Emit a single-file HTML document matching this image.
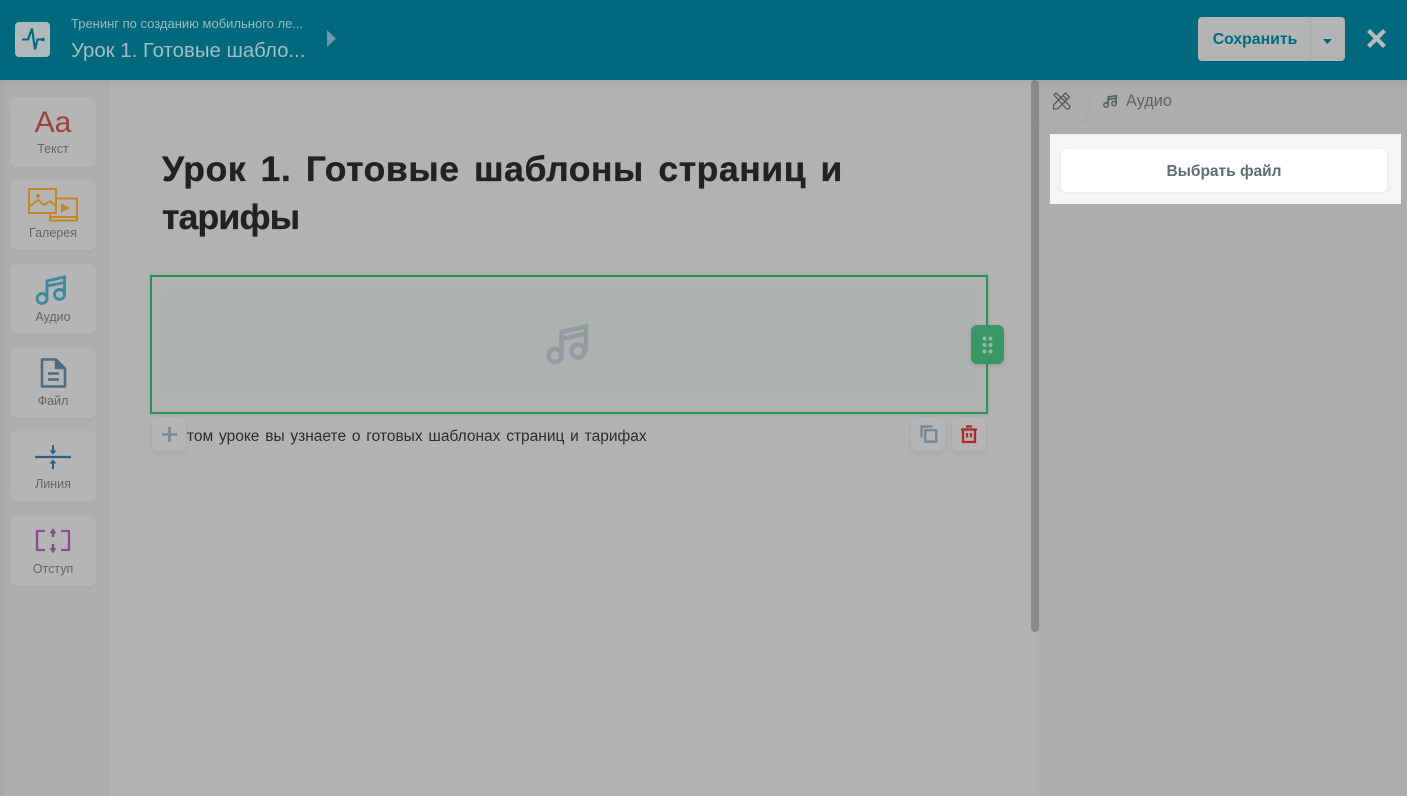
<!DOCTYPE html>
<html lang="ru"><head><meta charset="utf-8"><title>Урок</title>
<style>
html,body{margin:0;padding:0}
body{width:1407px;height:796px;overflow:hidden;position:relative;background:#b2b2b2;font-family:"Liberation Sans","Noto Sans CJK SC",sans-serif}
.a{position:absolute;white-space:nowrap}
svg{position:absolute;display:block;overflow:visible}
.card{position:absolute;left:10px;width:86px;height:70px;background:#b4b5b4;border-radius:6px;box-shadow:0 1px 2px rgba(0,0,0,.03)}
.card span{position:absolute;left:0;right:0;text-align:center;top:45px;font-size:12.5px;line-height:16px;color:#626464}
.mini{position:absolute;width:34px;height:34px;background:#b5b5b5;border-radius:6px;box-shadow:0 2px 5px rgba(0,0,0,.07)}
</style></head><body>
<div class="a" style="left:0;top:80px;width:108px;height:716px;background:#acafad;border-right:1px solid #a9abaa;box-shadow:inset 8px 0 8px -6px rgba(0,0,0,.05)"></div>
<div class="a" style="left:1039px;top:80px;width:368px;height:716px;background:#acaead"></div>
<div class="a" style="left:1031px;top:80px;width:8px;height:552px;background:#8a8a8a;border-radius:4px"></div>
<div class="a" style="left:0;top:80px;width:1407px;height:10px;background:linear-gradient(rgba(0,0,0,.04),rgba(0,0,0,0))"></div>

<div class="a" style="left:0;top:0;width:1407px;height:80px;background:#00697d"></div>
<div class="a" style="left:15px;top:22px;width:35px;height:35px;background:#b2b9ba;border-radius:4px"></div>
<svg style="left:15px;top:22px" width="35" height="35" viewBox="0 0 35 35"><path d="M7 17.500h6l4-11 3 21 2.500-10H27" fill="none" stroke="#00697d" stroke-width="2.100"/><circle cx="28" cy="17.500" r="1.800" fill="#00697d"/></svg>
<div class="a" style="left:71px;top:15px;font-size:13px;line-height:17px;color:#9cbac0">Тренинг по созданию мобильного ле...</div>
<div class="a" style="left:71px;top:38px;font-size:20.400px;line-height:26px;color:#a3bdc3">Урок 1. Готовые шабло...</div>
<svg style="left:327px;top:30px" width="9" height="17"><path d="M0 0l9 8.500-9 8.500z" fill="#679ca8"/></svg>
<div class="a" style="left:1198px;top:17px;width:147px;height:44px;background:#b3b5b5;border-radius:4px"></div>
<div class="a" style="left:1310px;top:17px;width:1px;height:44px;background:#a8abab"></div>
<div class="a" style="left:1199px;top:18px;width:112px;height:44px;line-height:43px;text-align:center;font-size:15.800px;font-weight:bold;color:#00697d">Сохранить</div>
<svg style="left:1323px;top:39px" width="10" height="5"><path d="M0 0h9L4.500 5z" fill="#00637a"/></svg>
<svg style="left:1366px;top:28px" width="21" height="21"><path d="M2.500 2.500l16 16M18.500 2.500l-16 16" stroke="#b3bbbc" stroke-width="4.200" fill="none"/></svg>

<div class="card" style="top:97px"><span style="top:44px">Текст</span><div class="a" style="left:0;right:0;top:7px;text-align:center;font-size:30px;line-height:38px;color:#9a423c">Aa</div></div>
<div class="card" style="top:180px"><span>Галерея</span>
<svg style="left:18px;top:8px" width="50" height="36" fill="none" stroke="#c28521" stroke-width="1.900"><rect x="1" y="1" width="27" height="24"/><path d="M1 19l9-7 6 5 6-4 6 5"/><circle cx="10" cy="8" r="2" fill="#c28521" stroke="none"/><path d="M28 10.500h21v22H22v-7"/><path d="M22 29h27"/><path d="M33 15.500l9 4.500-9 4.500z" fill="#c28521" stroke="none"/></svg></div>
<div class="card" style="top:264px"><span>Аудио</span>
<svg style="left:25px;top:11px" width="36" height="30" fill="none" stroke="#3a8aa1" stroke-width="2.900"><circle cx="7" cy="23.500" r="5"/><circle cx="24.500" cy="19.500" r="5"/><path d="M12 23.500V6L29.500 2v18M12 11L29.500 7.500"/></svg></div>
<div class="card" style="top:348px"><span>Файл</span>
<svg style="left:30px;top:10px" width="27" height="31" fill="none" stroke="#4a6b81" stroke-width="2.600" stroke-linejoin="round"><path d="M2 1.500h14l9 9V28.500H2z"/><path d="M15.500 1.500V10.500H25" fill="#4a6b81" stroke-width="1.500"/><path d="M8 15.500h11M8 21.500h11"/></svg></div>
<div class="card" style="top:431px"><span>Линия</span>
<svg style="left:25px;top:13px" width="36" height="28"><path d="M0 13h36" stroke="#256186" stroke-width="2.200"/><path d="M18 1v7" stroke="#256186" stroke-width="2"/><path d="M14.500 6.500h7L18 10.500zM14.500 19.500h7L18 15.500z" fill="#256186"/><path d="M18 25v-7" stroke="#256186" stroke-width="2"/></svg></div>
<div class="card" style="top:516px"><span>Отступ</span>
<svg style="left:25px;top:12px" width="36" height="28" fill="none" stroke="#8e4993" stroke-width="2.300" stroke-linejoin="round"><path d="M10 3H2v19h8M26 3h8v19h-8"/><path d="M18 3v6M18 16v6" /><path d="M15.500 5l2.500-4 2.500 4zM15.500 20.500l2.500 4 2.500-4z" fill="#8e4993" stroke-width="1"/></svg></div>

<div class="a" style="left:162px;top:146px;font-size:35.500px;line-height:47.500px;font-weight:bold;color:#222;-webkit-text-stroke:.35px #222"><span style="word-spacing:4px;letter-spacing:.58px">Урок 1. Готовые шаблоны страниц и</span><br><span style="letter-spacing:-.8px">тарифы</span></div>
<div class="a" style="left:150px;top:275px;width:834px;height:135px;border:2px solid #2b905b;box-shadow:0 0 3px rgba(47,157,100,.3)"></div>
<div class="a" style="left:162px;top:289px;width:814px;height:107px;background:#acb1b2"></div>
<svg style="left:546px;top:324px" width="44" height="42" fill="none" stroke="#949b9c" stroke-width="4.500"><circle cx="9" cy="31.500" r="6.500"/><circle cx="32" cy="27" r="6.500"/><path d="M15.500 31.500V8L40 2.500V27M15.500 15L40 9.500"/></svg>
<div class="a" style="left:971px;top:325px;width:33px;height:39px;background:#399665;border-radius:6px;box-shadow:0 2px 5px rgba(0,0,0,.1)"></div>
<svg style="left:982px;top:336px" width="11" height="18" fill="#9cb8a9"><circle cx="2.500" cy="2.500" r="2"/><circle cx="8.500" cy="2.500" r="2"/><circle cx="2.500" cy="9" r="2"/><circle cx="8.500" cy="9" r="2"/><circle cx="2.500" cy="15.500" r="2"/><circle cx="8.500" cy="15.500" r="2"/></svg>

<div class="a" style="left:187px;top:427px;font-size:15.500px;line-height:20px;color:#2c2c2c;word-spacing:1.500px">том уроке вы узнаете о готовых шаблонах страниц и тарифах</div>
<div class="mini" style="left:152px;top:417px"></div>
<svg style="left:162px;top:427px" width="15" height="15"><path d="M7.500 0v15M0 7.500h15" stroke="#7a8a98" stroke-width="2.800"/></svg>
<div class="mini" style="left:911px;top:417px"></div>
<svg style="left:920px;top:425px" width="18" height="18" fill="none" stroke="#738696" stroke-width="2.300"><rect x="5.200" y="5.200" width="11" height="11.500" /><path d="M1.500 12.500V1.500h11"/></svg>
<div class="mini" style="left:952px;top:417px"></div>
<svg style="left:960px;top:425px" width="18" height="18" fill="none" stroke="#a92d25" stroke-width="2.300"><path d="M1 4.500h16"/><path d="M6 1.500h6" /><path d="M3 4.500v12.500h12V4.500"/><path d="M7 8v4.500M11 8v4.500"/></svg>

<svg style="left:1052px;top:91px" width="19" height="19" fill="none" stroke="#555a5a" stroke-width="1.300" stroke-linejoin="round"><path d="M1.500 14L13.500 2l4 4L5.500 18h-4z"/><path d="M2 4l2-2 14 13-1 3h-2.500z"/><path d="M11 4.500l4 4"/></svg>
<svg style="left:1083px;top:80px" width="10" height="42" fill="none" stroke="#9fa5a4"><path d="M1 0l7 21L1 42"/></svg>
<svg style="left:1103px;top:94px" width="15" height="14" fill="none" stroke="#555a5a" stroke-width="1.500"><circle cx="3" cy="11" r="2.200"/><circle cx="11" cy="9.500" r="2.200"/><path d="M5.200 11V3l8-1.500v8M5.200 5.500l8-1.500"/></svg>
<div class="a" style="left:1126px;top:91px;font-size:16.300px;line-height:21px;color:#5f6362">Аудио</div>
<div class="a" style="left:1039px;top:122px;width:368px;height:1px;background:#a5a8a7"></div>
<div class="a" style="left:1050px;top:134px;width:351px;height:70px;background:#f4f6f6"></div>
<div class="a" style="left:1061px;top:149px;width:326px;height:43px;background:#fff;border-radius:5px;box-shadow:0 1px 3px rgba(0,0,0,.06);line-height:45px;text-align:center;font-size:15.500px;font-weight:bold;color:#5f6d74">Выбрать файл</div>
</body></html>
